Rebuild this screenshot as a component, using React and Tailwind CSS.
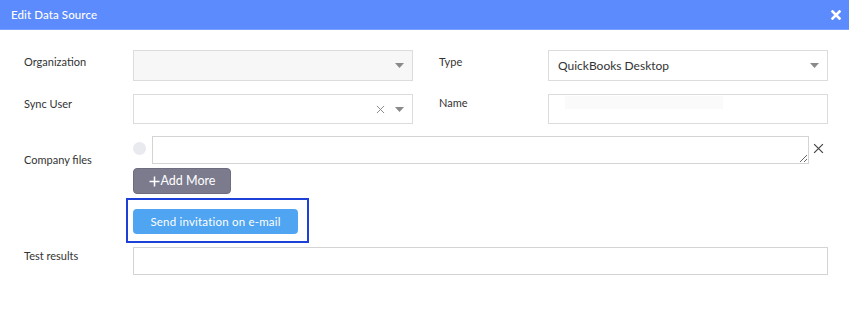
import React from "react";

const Arrow = () => (
  <svg width="9" height="5" viewBox="0 0 9 5" className="shrink-0">
    <path d="M0 0 L9 0 L4.5 5 Z" fill="#8a8a8a" />
  </svg>
);

const ThinX = ({ size = 9, color = "#8a8a8a", sw = 1.2 }) => (
  <svg width={size} height={size} viewBox="0 0 10 10" className="shrink-0">
    <path d="M1 1 L9 9 M9 1 L1 9" stroke={color} strokeWidth={sw} fill="none" />
  </svg>
);

const Label = ({ children, className = "" }) => (
  <div className={`w-[109px] shrink-0 text-[11px] text-[#333] ${className}`}>{children}</div>
);

export default function App() {
  return (
    <div className="w-[849px] h-[310px] bg-white overflow-hidden font-['Lato',sans-serif]">
      <div className="h-[30px] bg-[#5b8bfc] border-b border-[#7aa2fd] flex items-center justify-between pl-[11px] pr-[8px]">
        <span className="text-white text-[11.5px] font-medium tracking-[0.1px]">Edit Data Source</span>
        <svg width="10" height="10" viewBox="0 0 10 10">
          <path d="M1.5 1.5 L8.5 8.5 M8.5 1.5 L1.5 8.5" stroke="#fff" strokeWidth="2.6" strokeLinecap="square" />
        </svg>
      </div>

      <div className="pl-[24px] pr-[21px] pt-[20px] flex flex-col">
        {/* Row 1 */}
        <div className="flex gap-[26px]">
          <div className="flex">
            <Label className="pt-[4px]">Organization</Label>
            <div className="w-[280px] h-[31px] border border-[#dcdcdc] bg-[#f7f7f7] flex items-center justify-end pr-[8px]">
              <Arrow />
            </div>
          </div>
          <div className="flex">
            <Label className="pt-[4px]">Type</Label>
            <div className="w-[280px] h-[31px] border border-[#dcdcdc] bg-white flex items-center justify-between pl-[9px] pr-[8px]">
              <span className="text-[12px] text-[#333]">QuickBooks Desktop</span>
              <Arrow />
            </div>
          </div>
        </div>

        {/* Row 2 */}
        <div className="flex gap-[26px] mt-[13px]">
          <div className="flex">
            <Label className="pt-[2px]">Sync User</Label>
            <div className="w-[280px] h-[30px] border border-[#dcdcdc] bg-white flex items-center justify-end gap-[10px] pr-[8px]">
              <ThinX size={9} color="#8a8a8a" sw={1.1} />
              <Arrow />
            </div>
          </div>
          <div className="flex">
            <Label className="pt-[1px]">Name</Label>
            <div className="w-[280px] h-[30px] border border-[#dcdcdc] bg-white pl-[16px] pt-[1px]">
              <div className="w-[158px] h-[13px] bg-[#fafafa]" />
            </div>
          </div>
        </div>

        {/* Company files */}
        <div className="flex mt-[12px]">
          <Label className="pt-[16px]">Company files</Label>
          <div className="flex flex-col items-start">
            <div className="flex items-center">
              <div className="w-[13px] h-[13px] rounded-full bg-[#e9e9f0] mr-[6px] mt-[-3px]" />
              <textarea className="w-[657px] h-[28px] border border-[#d4d4d4] bg-white block" />
              <div className="ml-[4px] mt-[-4px]">
                <ThinX size={11} color="#444" sw={1.1} />
              </div>
            </div>
            <button className="mt-[4px] w-[98px] h-[26px] rounded-[4px] bg-[#7c7b8e] border border-[#6e6d80] text-white text-[12.5px] flex items-center justify-center">
              <svg width="11" height="11" viewBox="0 0 11 11" className="mr-[1px]">
                <path d="M5.5 0.5 V10.5 M0.5 5.5 H10.5" stroke="#fff" strokeWidth="1.5" />
              </svg>
              Add More
            </button>
            <div className="mt-[4px] ml-[-7px] border-2 border-[#1d40d8] pt-[8px] pl-[5px] pr-[9px] pb-[7px]">
              <button className="w-[165px] h-[25px] rounded-[4px] bg-[#4fa5f1] text-white text-[11.5px] tracking-[0.2px]">
                Send invitation on e-mail
              </button>
            </div>
          </div>
        </div>

        {/* Test results */}
        <div className="flex mt-[4px]">
          <Label className="pt-[1px]">Test results</Label>
          <div className="w-[695px] h-[28px] border border-[#d4d4d4] bg-white" />
        </div>
      </div>
    </div>
  );
}
